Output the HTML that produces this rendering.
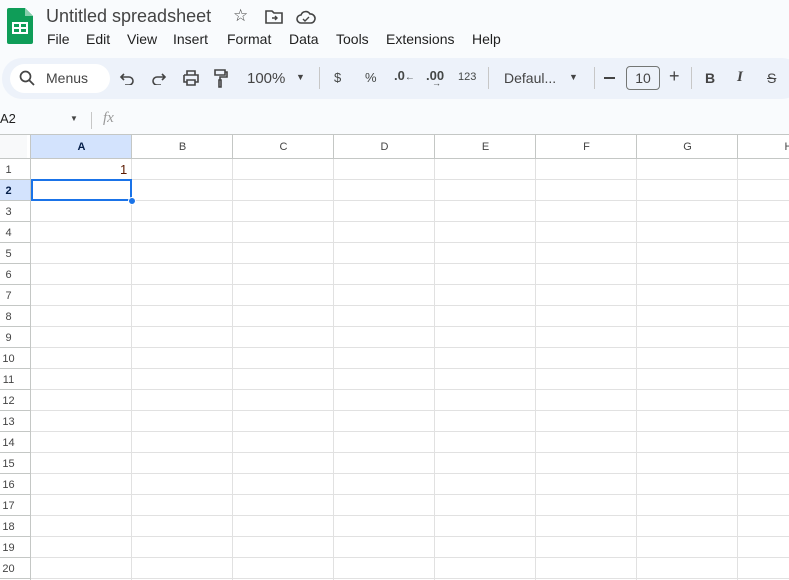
<!DOCTYPE html>
<html><head><meta charset="utf-8"><style>
*{margin:0;padding:0;box-sizing:border-box}
body{width:789px;height:580px;overflow:hidden;background:#f9fbfd;font-family:"Liberation Sans",Arial,sans-serif;position:relative;color:#1f1f1f}
.a{position:absolute;white-space:nowrap}
.tb{position:absolute;left:2px;top:58px;width:800px;height:41px;background:#edf2fa;border-radius:20px}
.ic{position:absolute;color:#444746;font-size:14px}
.sheet{position:absolute;left:0;top:134px;width:789px;height:446px;background:#fff}
.rl{position:absolute;left:0;width:17px;text-align:center;font-size:11px;color:#444}
.cl{position:absolute;top:141px;width:101px;text-align:center;font-size:11px;color:#444}
</style></head><body>
<svg class="a" style="left:7px;top:8px" width="26" height="36" viewBox="0 0 26 36"><path d="M2 0h16l8 8v26a2 2 0 0 1-2 2H2a2 2 0 0 1-2-2V2a2 2 0 0 1 2-2z" fill="#0f9d58"/><path d="M18 0v8h8z" fill="#87ceac"/><rect x="5" y="14" width="16" height="12" fill="#fff"/><rect x="7" y="16" width="5" height="3" fill="#0f9d58"/><rect x="14" y="16" width="5" height="3" fill="#0f9d58"/><rect x="7" y="21" width="5" height="3" fill="#0f9d58"/><rect x="14" y="21" width="5" height="3" fill="#0f9d58"/></svg>
<div class="a" style="left:46px;top:6px;font-size:18px;color:#444">Untitled spreadsheet</div>
<div class="a" style="left:233px;top:6px;font-size:17px;color:#444">☆</div>
<svg class="a" style="left:265px;top:10px" width="18" height="14" viewBox="0 0 18 14"><path d="M1 1h6l2 2h8v10H1z" fill="none" stroke="#444" stroke-width="1.6"/><path d="M7 8h5M10 6l2 2-2 2" fill="none" stroke="#444" stroke-width="1.4"/></svg>
<svg class="a" style="left:296px;top:10px" width="20" height="14" viewBox="0 0 20 14"><path d="M5 13a4 4 0 0 1 0-8 5 5 0 0 1 9-1 4.5 4.5 0 0 1 1 9z" fill="none" stroke="#444" stroke-width="1.6"/><path d="M7 9l2 2 4-4" fill="none" stroke="#444" stroke-width="1.4"/></svg>
<div class="a" style="top:31px;font-size:14px;color:#1f1f1f">
<span class="a" style="left:47px">File</span><span class="a" style="left:86px">Edit</span><span class="a" style="left:127px">View</span><span class="a" style="left:173px">Insert</span><span class="a" style="left:227px">Format</span><span class="a" style="left:289px">Data</span><span class="a" style="left:336px">Tools</span><span class="a" style="left:386px">Extensions</span><span class="a" style="left:472px">Help</span></div>
<div class="tb"></div>
<div class="a" style="left:10px;top:64px;width:100px;height:29px;background:#fff;border-radius:15px"></div>
<svg class="a" style="left:19px;top:70px" width="16" height="16" viewBox="0 0 16 16"><circle cx="6.5" cy="6.5" r="5" fill="none" stroke="#444" stroke-width="1.7"/><path d="M10 10l5 5" stroke="#444" stroke-width="1.8"/></svg>
<div class="a" style="left:46px;top:70px;font-size:14px;color:#444">Menus</div>
<svg class="a" style="left:119px;top:72px" width="16" height="13" viewBox="0 0 16 13"><path d="M3 5h7a4 4 0 0 1 0 8H6M5 2L2 5l3 3" fill="none" stroke="#444" stroke-width="1.6"/></svg>
<svg class="a" style="left:151px;top:72px" width="16" height="13" viewBox="0 0 16 13"><path d="M13 5H6a4 4 0 0 0 0 8h4M11 2l3 3-3 3" fill="none" stroke="#444" stroke-width="1.6"/></svg>
<svg class="a" style="left:182px;top:70px" width="18" height="16" viewBox="0 0 18 16"><path d="M5 5V1h8v4M2 5h14v7h-3M5 12H2V5M5 10h8v5H5z" fill="none" stroke="#444" stroke-width="1.6"/></svg>
<svg class="a" style="left:214px;top:69px" width="14" height="19" viewBox="0 0 14 19"><path d="M1 1h10v5H1zM11 3h2v5H6v3M5 11h2v7H5z" fill="none" stroke="#444" stroke-width="1.6"/></svg>
<div class="a" style="left:247px;top:70px;font-size:15px;color:#444">100%</div>
<div class="a" style="left:296px;top:72px;font-size:9px;color:#444">▼</div>
<div class="a" style="left:319px;top:67px;width:1px;height:22px;background:#c7c7c7"></div>
<div class="ic a" style="left:334px;top:70px;font-size:13px">$</div>
<div class="ic a" style="left:365px;top:70px;font-size:13px">%</div>
<div class="ic a" style="left:394px;top:68px;font-size:13px;font-weight:bold">.0<span style="font-size:10px">←</span></div>
<div class="ic a" style="left:426px;top:68px;font-size:13px;font-weight:bold">.00<span style="font-size:9px;position:absolute;left:6px;top:10px">→</span></div>
<div class="ic a" style="left:458px;top:71px;font-size:11px">123</div>
<div class="a" style="left:488px;top:67px;width:1px;height:22px;background:#c7c7c7"></div>
<div class="a" style="left:504px;top:70px;font-size:14px;color:#444">Defaul...</div>
<div class="a" style="left:569px;top:72px;font-size:9px;color:#444">▼</div>
<div class="a" style="left:594px;top:67px;width:1px;height:22px;background:#c7c7c7"></div>
<div class="a" style="left:604px;top:77px;width:11px;height:1.6px;background:#444"></div>
<div class="a" style="left:626px;top:66px;width:34px;height:24px;border:1px solid #747775;border-radius:4px;font-size:14px;text-align:center;line-height:22px;color:#444">10</div>
<div class="a" style="left:669px;top:66px;font-size:18px;color:#444">+</div>
<div class="a" style="left:691px;top:67px;width:1px;height:22px;background:#c7c7c7"></div>
<div class="a" style="left:705px;top:70px;font-size:14px;font-weight:bold;color:#444">B</div>
<div class="a" style="left:737px;top:69px;font-size:15px;font-style:italic;font-family:'Liberation Serif',serif;font-weight:bold;color:#444">I</div>
<div class="a" style="left:767px;top:70px;font-size:14px;color:#444"><span style="text-decoration:line-through">S</span></div>
<div class="a" style="left:0;top:111px;font-size:13px">A2</div>
<div class="a" style="left:70px;top:114px;font-size:8px;color:#444">▼</div>
<div class="a" style="left:91px;top:112px;width:1px;height:17px;background:#c7c7c7"></div>
<div class="a" style="left:103px;top:110px;font-size:15px;font-style:italic;font-family:'Liberation Serif',serif;color:#999">fx</div>
<div class="sheet">
<div class="a" style="left:0;top:0;width:789px;height:1px;background:#c4c7c5"></div>
<div class="a" style="left:0;top:1px;width:27px;height:23px;background:#f8f9fa"></div>
<div class="a" style="left:0;top:24px;width:789px;height:1px;background:#c4c7c5"></div>
<div class="a" style="left:31px;top:1px;width:100px;height:23px;background:#d3e3fd"></div>
<div class="a" style="left:0;top:46px;width:30px;height:20px;background:#d3e3fd"></div>
<div class="a" style="left:30px;top:0;width:1px;height:446px;background:#c4c7c5"></div>
<div class="a" style="left:31px;top:25px;width:758px;height:421px;background-image:repeating-linear-gradient(to right,transparent 0 100px,#e1e1e1 100px 101px),repeating-linear-gradient(to bottom,transparent 0 20px,#e1e1e1 20px 21px)"></div>
<div class="a" style="left:0;top:25px;width:30px;height:421px;background-image:repeating-linear-gradient(to bottom,transparent 0 20px,#c4c7c5 20px 21px)"></div>
<div class="a" style="left:131px;top:0;width:1px;height:25px;background:#c4c7c5;box-shadow:101px 0 #c4c7c5,202px 0 #c4c7c5,303px 0 #c4c7c5,404px 0 #c4c7c5,505px 0 #c4c7c5,606px 0 #c4c7c5"></div>
</div>
<div class="cl" style="left:31px;font-weight:bold;color:#041e49">A</div>
<div class="cl" style="left:132px">B</div><div class="cl" style="left:233px">C</div><div class="cl" style="left:334px">D</div><div class="cl" style="left:435px">E</div><div class="cl" style="left:536px">F</div><div class="cl" style="left:637px">G</div><div class="cl" style="left:738px">H</div>
<div class="rl" style="top:164px">1</div><div class="rl" style="top:185px;font-weight:bold;color:#041e49">2</div><div class="rl" style="top:206px">3</div><div class="rl" style="top:227px">4</div><div class="rl" style="top:248px">5</div><div class="rl" style="top:269px">6</div><div class="rl" style="top:290px">7</div><div class="rl" style="top:311px">8</div><div class="rl" style="top:332px">9</div><div class="rl" style="top:353px">10</div><div class="rl" style="top:374px">11</div><div class="rl" style="top:395px">12</div><div class="rl" style="top:416px">13</div><div class="rl" style="top:437px">14</div><div class="rl" style="top:458px">15</div><div class="rl" style="top:479px">16</div><div class="rl" style="top:500px">17</div><div class="rl" style="top:521px">18</div><div class="rl" style="top:542px">19</div><div class="rl" style="top:563px">20</div>
<div class="a" style="left:120px;top:162px;font-size:13px;color:#5b1a00">1</div>
<div class="a" style="left:31px;top:179px;width:101px;height:22px;border:2px solid #1a73e8"></div>
<div class="a" style="left:128px;top:197px;width:8px;height:8px;border-radius:50%;background:#1a73e8;border:1px solid #fff"></div>
</body></html>
